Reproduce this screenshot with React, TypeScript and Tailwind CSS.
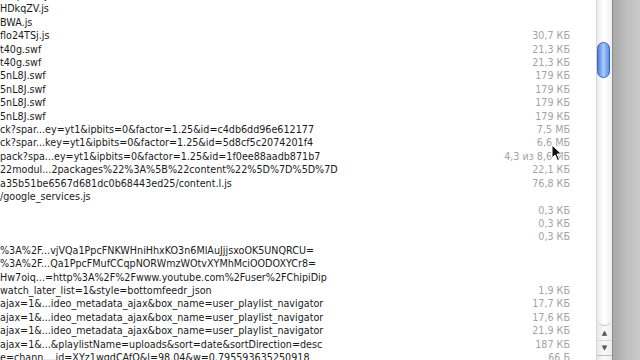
import React from "react";

const rows: [string, string][] = [
  ["ZVqGmo.js", ""],
  ["HDkqZV.js", ""],
  ["BWA.js", ""],
  ["flo24TSj.js", "30,7 КБ"],
  ["t40g.swf", "21,3 КБ"],
  ["t40g.swf", "21,3 КБ"],
  ["5nL8J.swf", "179 КБ"],
  ["5nL8J.swf", "179 КБ"],
  ["5nL8J.swf", "179 КБ"],
  ["5nL8J.swf", "179 КБ"],
  ["ck?spar...ey=yt1&ipbits=0&factor=1.25&id=c4db6dd96e612177", "7,5 МБ"],
  ["ck?spar...key=yt1&ipbits=0&factor=1.25&id=5d8cf5c2074201f4", "6,6 МБ"],
  ["pack?spa...ey=yt1&ipbits=0&factor=1.25&id=1f0ee88aadb871b7", "4,3 из 8,6 МБ"],
  ["22modul...2packages%22%3A%5B%22content%22%5D%7D%5D%7D", "22,1 КБ"],
  ["a35b51be6567d681dc0b68443ed25/content.l.js", "76,8 КБ"],
  ["/google_services.js", ""],
  ["", "0,3 КБ"],
  ["", "0,3 КБ"],
  ["", "0,3 КБ"],
  ["%3A%2F...vjVQa1PpcFNKWHniHhxKO3n6MlAuJjjsxoOK5UNQRCU=", ""],
  ["%3A%2F...Qa1PpcFMufCCqpNORWmzWOtvXYMhMciOODOXYCr8=", ""],
  ["Hw7oiq...=http%3A%2F%2Fwww.youtube.com%2Fuser%2FChipiDip", ""],
  ["watch_later_list=1&style=bottomfeedr_json", "1,9 КБ"],
  ["ajax=1&...ideo_metadata_ajax&box_name=user_playlist_navigator", "17,7 КБ"],
  ["ajax=1&...ideo_metadata_ajax&box_name=user_playlist_navigator", "17,6 КБ"],
  ["ajax=1&...ideo_metadata_ajax&box_name=user_playlist_navigator", "21,9 КБ"],
  ["ajax=1&...&playlistName=uploads&sort=date&sortDirection=desc", "187 КБ"],
  ["e=chann....id=XYz1wqdCAfO&l=98.04&w=0.795593635250918", "66 Б"],
];

export default function App() {
  return (
    <div className="relative w-[640px] h-[360px] overflow-hidden bg-white flex" style={{ fontFamily: '"DejaVu Sans", sans-serif' }}>
      <div className="w-[596px] h-full overflow-hidden bg-white">
        <div className="-mt-[11px] flex flex-col">
          {rows.map(([name, size], i) => (
            <div key={i} className="h-[13.42px] flex items-center text-[9.6px] leading-[13.42px] whitespace-nowrap">
              <div className="flex-1 overflow-hidden text-[#1a1a1a]">{name}</div>
              <div className="w-[140px] pr-[26px] text-right text-[#a3a3a3] shrink-0">{size}</div>
            </div>
          ))}
        </div>
      </div>
      <div className="w-[16px] h-full flex flex-col border-l border-[#d6d6d6] bg-gradient-to-r from-[#e8e8e8] via-[#fafafa] to-[#ececec]">
        <div className="h-[326px] relative rounded-b-[8px] border-b border-[#c8c8c8] bg-gradient-to-r from-[#ececec] via-white to-[#efefef]">
          <div className="absolute left-[0px] top-[42px] w-[13px] h-[36px] rounded-[7px] border border-[#3a62c0] bg-gradient-to-r from-[#4f82e0] via-[#a9cbf7] to-[#5b8fe4]" />
        </div>
        <div className="h-[15px] flex items-center justify-center border-b border-[#d8d8d8] text-[7px] text-[#555]">▲</div>
        <div className="h-[15px] flex items-center justify-center border-b border-[#bdbdbd] text-[7px] text-[#555]">▼</div>
      </div>
      <div className="flex-1 h-full border-l border-[#8c8c8c] bg-gradient-to-r from-[#a9a9a9] via-[#bebebe] to-[#c9c9c9]" />
      <svg className="absolute left-[551px] top-[144px]" width="12" height="18" viewBox="0 0 12 18">
        <path d="M1 1 L1 14 L4 11 L6.5 16.5 L8.5 15.5 L6 10 L10.5 10 Z" fill="#111" stroke="#fff" strokeWidth="1" />
      </svg>
    </div>
  );
}
